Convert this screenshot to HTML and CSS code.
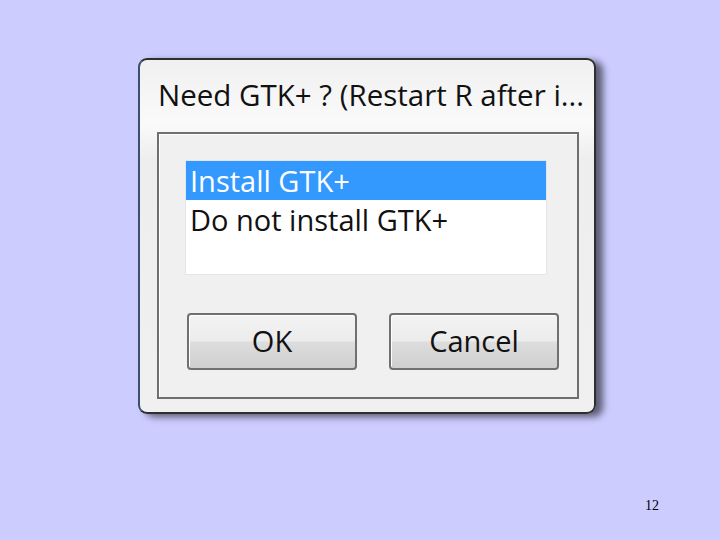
FILE: index.html
```html
<!DOCTYPE html>
<html lang="en">
<head>
    <meta charset="UTF-8">
    <title>Need GTK+</title>
    <link rel="stylesheet" href="styles.css">
</head>
<body>
    <div class="slide">
        <div class="dialog">
            <p class="caption">Need GTK+ ? (Restart R after i...</p>
            <div class="group">
                <ul class="list">
                    <li class="on">Install GTK+</li>
                    <li>Do not install GTK+</li>
                </ul>
                <div class="btns">
                    <span class="btn">OK</span>
                    <span class="btn">Cancel</span>
                </div>
            </div>
        </div>
        <p class="num">12</p>
    </div>
</body>
</html>
```

FILE: styles.css
```css
ul,ol{ padding: 0;list-style:none;}
body,p,ul{ margin: 0;}
body{
    background-color: #ccccff;
}
.slide{
    width: 720px;
    height: 540px;
    padding-top: 58px;
    box-sizing: border-box;
    display: flex;
    flex-direction: column;
}
.dialog{
    width: 458px;
    height: 356px;
    margin-left: 138px;
    box-sizing: border-box;
    border: 2px solid #2e2e2e;
    border-left-color: #3c4f6e;
    border-radius: 9px;
    background: linear-gradient(#f0f0f0, #fafafa 18%, #eeeeee 28%, #f0f0f0);
    box-shadow: 7px 3px 7px rgba(0,0,0,.55);
    font-family: "Open Sans", sans-serif;
    color: #111;
}
.caption{
    height: 72px;
    padding-left: 18px;
    box-sizing: border-box;
    line-height: 70px;
    font-size: 29.5px;
    white-space: nowrap;
}
.group{
    width: 422px;
    margin-left: 17px;
    padding: 26px 0 27px 26px;
    box-sizing: border-box;
    border: 2px solid #6f6f6f;
    box-shadow: inset 1px 1px 0 #fff;
    background-color: #f0f0f0;
}
.list{
    width: 362px;
    height: 115px;
    background-color: #fff;
    border: 1px solid #e2e6ea;
    box-sizing: border-box;
    font-size: 29px;
}
.list li{
    height: 39px;
    line-height: 39px;
    padding-left: 4px;
}
.list li.on{
    background-color: #3399ff;
    color: #fff;
}
.btns{
    display: flex;
    gap: 32px;
    margin-top: 38px;
    margin-left: 2px;
}
.btn{
    width: 170px;
    height: 57px;
    box-sizing: border-box;
    border: 2px solid #707070;
    border-radius: 4px;
    background: linear-gradient(#f3f3f3, #ececec 48%, #dddddd 52%, #cfcfcf);
    box-shadow: inset 1px 1px 0 #fff;
    text-align: center;
    line-height: 52px;
    font-size: 29px;
}
.num{
    margin: auto 0 0 645px;
    padding-bottom: 26px;
    font-family: "Liberation Serif", serif;
    font-size: 14px;
}
```
